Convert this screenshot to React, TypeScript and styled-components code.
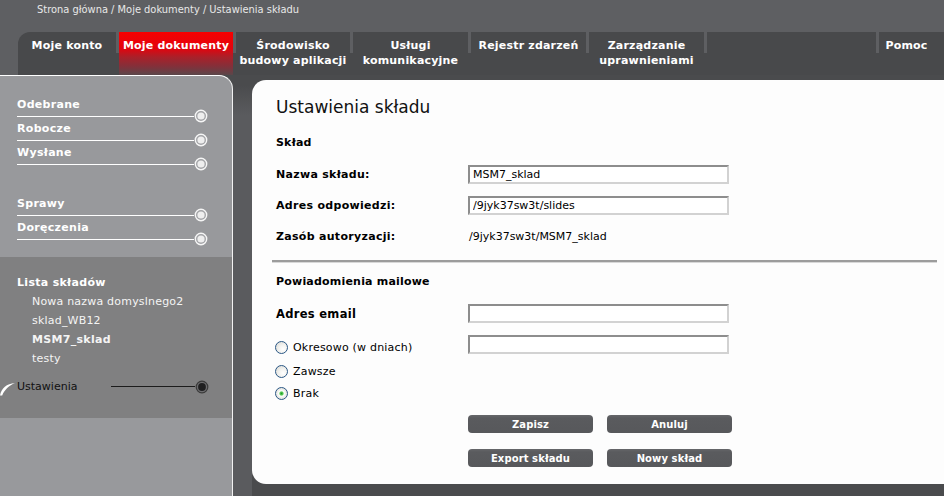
import React from 'react';
import styled, { createGlobalStyle, css } from 'styled-components';

const Global = createGlobalStyle`
  html, body { margin: 0; padding: 0; background: #4a4b4d; }
  body {
    width: 944px; height: 496px; overflow: hidden;
    font-family: "DejaVu Sans", Verdana, sans-serif;
  }
  * { box-sizing: border-box; }
`;

const Page = styled.div`
  width: 944px;
  height: 496px;
  display: flex;
  flex-direction: column;
  background: #4a4b4d;
`;

const TopBar = styled.div`
  height: 32px;
  flex: none;
  background: #5e5f62;
  color: #e8e8e8;
  font-size: 9.9px;
  line-height: 19px;
  padding-left: 37px;
`;

const TabBar = styled.nav`
  height: 43px;
  flex: none;
  display: flex;
  background: #5e5f62;
  padding-left: 18px;
`;

const Tab = styled.div<{ $w?: number; $active?: boolean; $first?: boolean; $pr?: number }>`
  ${(p) => (p.$w ? css`width: ${p.$w}px; flex: none;` : css`flex: 1;`)}
  background: #48494b;
  color: #ffffff;
  font-weight: bold;
  font-size: 11px;
  line-height: 15px;
  text-align: center;
  padding-top: 6px;
  padding-right: ${(p) => p.$pr ?? 0}px;
  letter-spacing: 0.2px;
  white-space: nowrap;
  ${(p) => p.$first && css`border-top-left-radius: 12px;`}
  ${(p) =>
    p.$active &&
    css`
      background: linear-gradient(180deg, #f80000 0%, #e2040e 38%, #ab2029 58%, #83303a 80%, #5a474a 100%);
    `}
`;

const TabSep = styled.div`
  width: 3px;
  flex: none;
  background: linear-gradient(180deg, #5e5f62 0, #5e5f62 21px, #48494b 21px);
`;

const Main = styled.div`
  flex: 1;
  display: flex;
  min-height: 0;
`;

const Sidebar = styled.aside`
  width: 233px;
  flex: none;
  display: flex;
  flex-direction: column;
  border-top: 1px solid #ffffff;
  border-right: 1px solid #f2f2f2;
  border-top-right-radius: 14px;
  overflow: hidden;
  background: #98999c;
`;

const NavSection = styled.div`
  padding: 20px 24px 14px 17px;
`;

const NavGroup = styled.div<{ $gap?: number }>`
  margin-top: ${(p) => p.$gap ?? 0}px;
`;

const NavItem = styled.div``;

const NavLabel = styled.div`
  height: 16px;
  line-height: 17px;
  color: #ffffff;
  font-weight: bold;
  font-size: 11px;
  letter-spacing: 0.3px;
`;

const Track = styled.div`
  height: 8px;
  display: flex;
  align-items: center;
`;

const TrackLine = styled.div<{ $dark?: boolean }>`
  flex: 1;
  height: 1px;
  background: ${(p) => (p.$dark ? '#1c1c1c' : '#ffffff')};
`;

const NodeSvg = styled.svg`
  flex: none;
  display: block;
`;

const Node = ({ active }: { active?: boolean }) => (
  <NodeSvg width="14" height="14" viewBox="0 0 14 14">
    {active ? (
      <>
        <circle cx="7" cy="7" r="5.8" fill="#6d6d6f" stroke="#3a3a3a" strokeWidth="1.2" />
        <circle cx="7" cy="7" r="3.9" fill="#1f1f20" />
      </>
    ) : (
      <>
        <circle cx="7" cy="7" r="5.7" fill="#a3a4a7" stroke="#f6f6f6" strokeWidth="1.4" />
        <circle cx="7" cy="7" r="3.6" fill="#eeeeee" />
      </>
    )}
  </NodeSvg>
);

const ListSection = styled.div`
  background: #808081;
  padding: 16px 23px 22px 0;
`;

const ListHeader = styled.div`
  padding-left: 17px;
  line-height: 19px;
  font-size: 11px;
  font-weight: bold;
  color: #ffffff;
  letter-spacing: 0.3px;
`;

const ListItem = styled.div<{ $bold?: boolean }>`
  padding-left: 32px;
  line-height: 19px;
  font-size: 11px;
  color: #f4f4f4;
  font-weight: ${(p) => (p.$bold ? 'bold' : 'normal')};
  letter-spacing: ${(p) => (p.$bold ? '0.3px' : '0.2px')};
`;

const CurrentRow = styled.div`
  margin-top: 9px;
  height: 19px;
  display: flex;
  align-items: center;
`;

const CurrentLabel = styled.div`
  width: 94px;
  flex: none;
  font-size: 11px;
  color: #111111;
`;

const SidebarRest = styled.div`
  flex: 1;
  background: #98999c;
`;

const Gutter = styled.div`
  width: 19px;
  flex: none;
  background: linear-gradient(180deg, #4a4b4d 0, #4a4b4d 10px, #5a5b5e 40px, #5a5b5e 100%);
`;

const ContentWrap = styled.div`
  flex: 1;
  display: flex;
  padding: 5px 0 12px 0;
`;

const Panel = styled.main`
  flex: 1;
  background: #fdfdfd;
  border-radius: 14px 0 0 14px;
  padding: 16px 7px 16px 24px;
  color: #000000;
  font-size: 11px;
`;

const Title = styled.h1`
  margin: 0;
  font-size: 17px;
  line-height: 22px;
  font-weight: normal;
  color: #111111;
`;

const SectionHead = styled.div<{ $mt: number }>`
  margin-top: ${(p) => p.$mt}px;
  margin-bottom: 8px;
  line-height: 16px;
  font-weight: bold;
  font-size: 11px;
  letter-spacing: 0.2px;
`;

const Row = styled.div<{ $h: number }>`
  display: grid;
  grid-template-columns: 192px 261px;
  align-items: center;
  height: ${(p) => p.$h}px;
`;

const Label = styled.label<{ $big?: boolean }>`
  font-weight: bold;
  font-size: ${(p) => (p.$big ? '11.5px' : '11px')};
  letter-spacing: 0.3px;
`;

const Value = styled.div`
  padding-left: 1px;
  font-size: 11px;
`;

const TextInput = styled.input`
  width: 261px;
  height: 19px;
  margin: 0;
  border: 2px solid;
  border-color: #8d8d8d #d2d2d2 #d2d2d2 #8d8d8d;
  background: #ffffff;
  padding: 0 3px;
  font-family: "DejaVu Sans", Verdana, sans-serif;
  font-size: 11px;
  color: #000000;
  outline: none;
`;

const Rule = styled.div`
  margin: 8px 0 0 -4px;
  background: #9c9c9c;
  border-bottom: 1px solid #d8d8d8;
  height: 3px;
`;

const RadioLabel = styled.label<{ $offset?: number }>`
  display: flex;
  align-items: center;
  margin-left: -1px;
  font-size: 11px;
  letter-spacing: 0.2px;
  padding-top: ${(p) => p.$offset ?? 0}px;
`;

const Radio = styled.input.attrs({ type: 'radio' })`
  appearance: none;
  -webkit-appearance: none;
  width: 13px;
  height: 13px;
  margin: 0 5px 0 0;
  border-radius: 50%;
  border: 1px solid #2a5785;
  background: radial-gradient(circle at 65% 65%, #ffffff 0%, #f1f1ee 45%, #d5d5cf 100%);
  flex: none;
  &:checked {
    background: radial-gradient(circle at 50% 50%, #1f9a2a 0, #5acb55 1.6px, #ffffff 2.6px, #f1f1ee 50%, #d5d5cf 100%);
  }
`;

const RadioRow = styled.div`
  height: 22px;
  display: flex;
  align-items: center;
`;

const Buttons = styled.div`
  margin: 11px 0 0 192px;
  display: grid;
  grid-template-columns: 125px 125px;
  column-gap: 14px;
  row-gap: 16px;
`;

const Button = styled.button`
  width: 125px;
  height: 18px;
  margin: 0;
  padding: 0;
  border: none;
  border-radius: 4px;
  background: linear-gradient(180deg, #66676a 0, #5a5b5e 3px, #57585b 100%);
  color: #ffffff;
  font-family: "DejaVu Sans", Verdana, sans-serif;
  font-weight: bold;
  font-size: 10px;
  letter-spacing: 0.1px;
`;

const SwooshSvg = styled.svg`
  flex: none;
  display: block;
`;

const Swoosh = () => (
  <SwooshSvg width="17" height="19" viewBox="0 0 17 19">
    <path d="M0 18.5 C1.5 11 6.5 6.8 15 6 C9 8.8 4.5 12.5 2.2 18.5 Z" fill="#ffffff" />
  </SwooshSvg>
);

const topItems = ['Odebrane', 'Robocze', 'Wysłane'];
const midItems = ['Sprawy', 'Doręczenia'];
const stores = ['Nowa nazwa domyslnego2', 'sklad_WB12', 'MSM7_sklad', 'testy'];

export default function App() {
  return (
    <>
      <Global />
      <Page>
        <TopBar>Strona główna / Moje dokumenty / Ustawienia składu</TopBar>
        <TabBar>
          <Tab $w={98} $first>Moje konto</Tab>
          <TabSep />
          <Tab $w={114} $active>Moje dokumenty</Tab>
          <TabSep />
          <Tab $w={114}>Środowisko<br />budowy aplikacji</Tab>
          <TabSep />
          <Tab $w={115}>Usługi<br />komunikacyjne</Tab>
          <TabSep />
          <Tab $w={115}>Rejestr zdarzeń</Tab>
          <TabSep />
          <Tab $w={115}>Zarządzanie<br />uprawnieniami</Tab>
          <TabSep />
          <Tab $w={169} />
          <TabSep />
          <Tab $pr={10}>Pomoc</Tab>
        </TabBar>
        <Main>
          <Sidebar>
            <NavSection>
              <NavGroup>
                {topItems.map((t) => (
                  <NavItem key={t}>
                    <NavLabel>{t}</NavLabel>
                    <Track>
                      <TrackLine />
                      <Node />
                    </Track>
                  </NavItem>
                ))}
              </NavGroup>
              <NavGroup $gap={27}>
                {midItems.map((t) => (
                  <NavItem key={t}>
                    <NavLabel>{t}</NavLabel>
                    <Track>
                      <TrackLine />
                      <Node />
                    </Track>
                  </NavItem>
                ))}
              </NavGroup>
            </NavSection>
            <ListSection>
              <ListHeader>Lista składów</ListHeader>
              {stores.map((s) => (
                <ListItem key={s} $bold={s === 'MSM7_sklad'}>{s}</ListItem>
              ))}
              <CurrentRow>
                <Swoosh />
                <CurrentLabel>Ustawienia</CurrentLabel>
                <TrackLine $dark />
                <Node active />
              </CurrentRow>
            </ListSection>
            <SidebarRest />
          </Sidebar>
          <Gutter />
          <ContentWrap>
            <Panel>
              <Title>Ustawienia składu</Title>
              <SectionHead $mt={17}>Skład</SectionHead>
              <Row $h={31}>
                <Label>Nazwa składu:</Label>
                <TextInput defaultValue="MSM7_sklad" />
              </Row>
              <Row $h={31}>
                <Label>Adres odpowiedzi:</Label>
                <TextInput defaultValue="/9jyk37sw3t/slides" />
              </Row>
              <Row $h={31}>
                <Label>Zasób autoryzacji:</Label>
                <Value>/9jyk37sw3t/MSM7_sklad</Value>
              </Row>
              <Rule />
              <SectionHead $mt={11}>Powiadomienia mailowe</SectionHead>
              <Row $h={31}>
                <Label $big>Adres email</Label>
                <TextInput />
              </Row>
              <Row $h={31}>
                <RadioLabel $offset={6}>
                  <Radio name="freq" />
                  Okresowo (w dniach)
                </RadioLabel>
                <TextInput />
              </Row>
              <RadioRow>
                <RadioLabel>
                  <Radio name="freq" />
                  Zawsze
                </RadioLabel>
              </RadioRow>
              <RadioRow>
                <RadioLabel>
                  <Radio name="freq" defaultChecked />
                  Brak
                </RadioLabel>
              </RadioRow>
              <Buttons>
                <Button>Zapisz</Button>
                <Button>Anuluj</Button>
                <Button>Export składu</Button>
                <Button>Nowy skład</Button>
              </Buttons>
            </Panel>
          </ContentWrap>
        </Main>
      </Page>
    </>
  );
}
